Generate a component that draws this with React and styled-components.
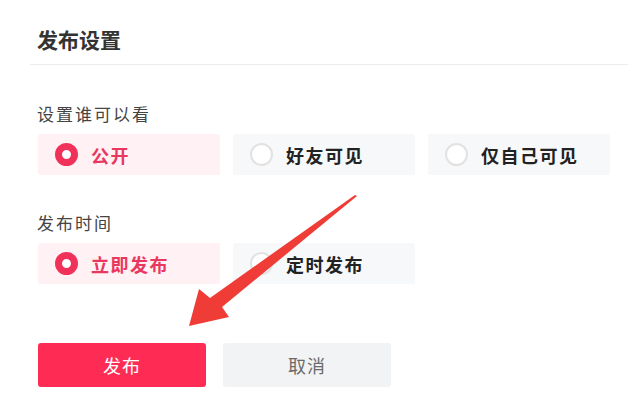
import React from 'react';
import styled, { createGlobalStyle } from 'styled-components';

const GlobalStyle = createGlobalStyle`
  body {
    margin: 0;
    background: #fff;
    font-family: "Noto Sans CJK SC", "Noto Sans", sans-serif;
  }
`;

const Page = styled.div`
  position: relative;
  width: 628px;
  height: 394px;
  overflow: hidden;
  background: #fff;
`;

const Header = styled.div`
  margin-left: 30px;
  padding: 25px 0 11px 7px;
  border-bottom: 1px solid #ededed;
`;

const Title = styled.h1`
  margin: 0;
  font-size: 21px;
  line-height: 28px;
  font-weight: 700;
  color: #333;
`;

const Body = styled.div`
  padding-left: 38px;
`;

const Section = styled.div`
  margin-top: ${p => p.$top}px;
`;

const Label = styled.div`
  margin-left: -1px;
  font-size: 17px;
  line-height: 22px;
  letter-spacing: 2px;
  color: #444;
`;

const Options = styled.div`
  display: flex;
  gap: 13px;
  margin-top: 9px;
`;

const Option = styled.div`
  display: flex;
  align-items: center;
  gap: 13px;
  width: 182px;
  height: 41px;
  padding-left: 17px;
  box-sizing: border-box;
  background: ${p => (p.$checked ? '#fff1f4' : '#f7f8fa')};
  border-radius: 2px;
  cursor: pointer;
`;

const Radio = styled.span`
  width: 23px;
  height: 23px;
  border-radius: 50%;
  box-sizing: border-box;
  border: ${p => (p.$checked ? '7px solid #f0325b' : '2px solid #e2e2e2')};
  background: #fff;
  flex-shrink: 0;
`;

const OptionText = styled.span`
  font-size: 18px;
  font-weight: 700;
  letter-spacing: 1.5px;
  color: ${p => (p.$checked ? '#e8385f' : '#222')};
`;

const Buttons = styled.div`
  display: flex;
  gap: 17px;
  margin-top: 59px;
`;

const Button = styled.button`
  width: 168px;
  height: 44px;
  border: none;
  border-radius: 3px;
  font-family: inherit;
  font-size: 18px;
  letter-spacing: 1px;
  background: ${p => (p.$primary ? '#fe2c55' : '#f2f3f4')};
  color: ${p => (p.$primary ? '#fff' : '#6b6b6b')};
  cursor: pointer;
`;

const Arrow = styled.svg`
  position: absolute;
  left: 0;
  top: 0;
  pointer-events: none;
`;

const visibility = [
  { key: 'public', label: '公开' },
  { key: 'friends', label: '好友可见' },
  { key: 'self', label: '仅自己可见' },
];

const timing = [
  { key: 'now', label: '立即发布' },
  { key: 'later', label: '定时发布' },
];

export default class App extends React.Component {
  state = {
    visibility: 'public',
    timing: 'now',
  };

  renderOptions(list, field) {
    return (
      <Options>
        {list.map(item => {
          const checked = this.state[field] === item.key;
          return (
            <Option
              key={item.key}
              $checked={checked}
              onClick={() => this.setState({ [field]: item.key })}
            >
              <Radio $checked={checked} />
              <OptionText $checked={checked}>{item.label}</OptionText>
            </Option>
          );
        })}
      </Options>
    );
  }

  render() {
    return (
      <Page>
        <GlobalStyle />
        <Header>
          <Title>发布设置</Title>
        </Header>
        <Body>
          <Section $top={38}>
            <Label>设置谁可以看</Label>
            {this.renderOptions(visibility, 'visibility')}
          </Section>
          <Section $top={37}>
            <Label>发布时间</Label>
            {this.renderOptions(timing, 'timing')}
          </Section>
          <Buttons>
            <Button $primary>发布</Button>
            <Button>取消</Button>
          </Buttons>
        </Body>
        <Arrow width="628" height="394" viewBox="0 0 628 394">
          <polygon
            points="357,196 222,307 229,317 189,326 199,289 210,298 355,195"
            fill="#f03c36"
          />
        </Arrow>
      </Page>
    );
  }
}
